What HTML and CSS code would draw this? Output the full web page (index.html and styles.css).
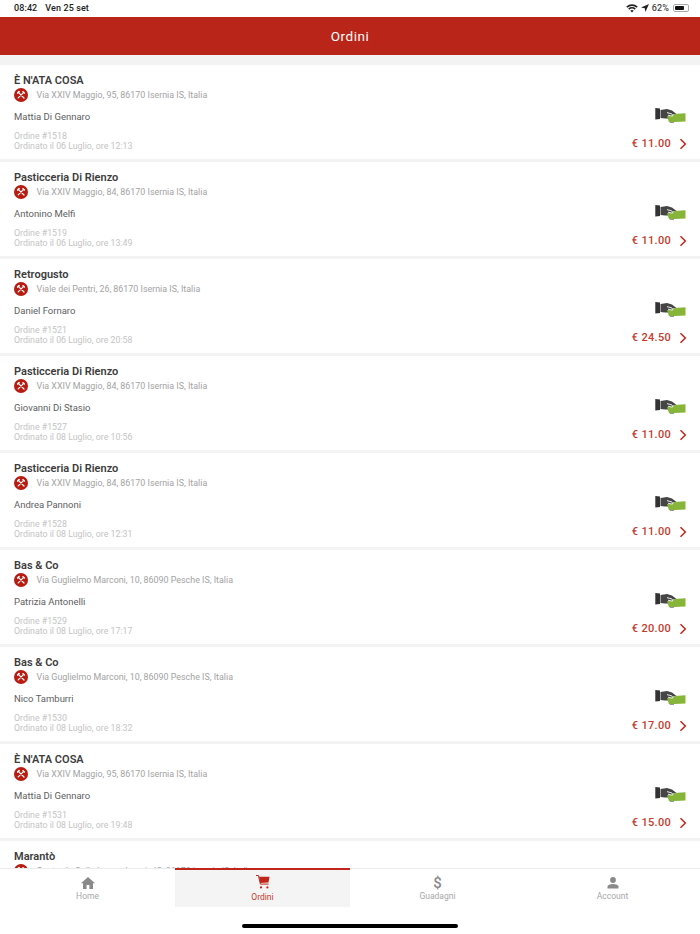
FILE: index.html
```html
<!DOCTYPE html>
<html lang="it">
<head>
<meta charset="utf-8">
<title>Ordini</title>
<link rel="stylesheet" href="styles.css">
</head>
<body>
<svg class="defs" width="0" height="0" aria-hidden="true">
  <symbol id="food" viewBox="0 0 14 14">
    <circle cx="7" cy="7" r="7" fill="#b71c10"/>
    <path d="M4.6 4.6L10 10M9.700 4.300L4.200 9.800" stroke="#fff" stroke-width="1.2" stroke-linecap="round"/>
    <path d="M3.700 5L5 3.700" stroke="#fff" stroke-width="1.700" stroke-linecap="round"/>
    <path d="M9 3.800L10.300 5" stroke="#fff" stroke-width="1.500" stroke-linecap="round"/>
  </symbol>
  <symbol id="cash" viewBox="0 0 31 15">
    <path d="M.3 0l4.700.5v10.500l-4.700.5z" fill="#333"/>
    <path d="M5.500 2L12 1l5 1.500 4.500 3.500-5 .5 1.500 2.500-2.500 1.500H10l-4.500-.5z" fill="#454545"/>
    <path d="M12 8l6-.2 1-1.800 11.500-.8v8.300L14 14.200z" fill="#86b53a"/>
    <path d="M12 4.600l5 1.400M13 7.200l4.500 1" stroke="#fff" stroke-width=".9"/>
    <path d="M15 14h4v1h-4z" fill="#999"/>
  </symbol>
  <symbol id="chev" viewBox="0 0 8 12">
    <path d="M1.500 1.200L6.300 6l-4.800 4.800" fill="none" stroke="#c0261a" stroke-width="1.500"/>
  </symbol>
</svg>
<div class="app">
  <div class="status">
    <div class="status-left"><span>08:42</span><span>Ven 25 set</span></div>
    <div class="status-right">
      <svg class="wifi" width="12" height="9" viewBox="0 0 12 9"><path d="M6 8.600L4.300 6.700a2.500 2.500 0 013.400 0zM3.300 5.700L2.200 4.500a5.600 5.600 0 017.600 0L8.700 5.700a4 4 0 00-5.400 0zM1.400 3.700L.3 2.500a8.400 8.400 0 0111.400 0l-1.100 1.200a6.800 6.800 0 00-9.200 0z" fill="#222"/></svg>
      <svg class="loc" width="8" height="8" viewBox="0 0 8 8"><path d="M8 0L0 3.600l3.800.6.6 3.800z" fill="#222"/></svg>
      <span>62%</span>
      <div class="batt"><div class="batt-fill"></div></div>
    </div>
  </div>
  <header class="bar">Ordini</header>
  <main class="list">
    <article class="card">
      <div class="card-main">
        <h2>È N'ATA COSA</h2>
        <div class="addr"><svg class="food"><use href="#food"/></svg><span>Via XXIV Maggio, 95, 86170 Isernia IS, Italia</span></div>
        <div class="person">Mattia Di Gennaro</div>
        <div class="meta">Ordine #1518<br>Ordinato il 06 Luglio, ore 12:13</div>
      </div>
      <div class="card-side"><svg class="cash"><use href="#cash"/></svg><div class="price"><span>€ 11.00</span><svg class="chev"><use href="#chev"/></svg></div></div>
    </article>
    <article class="card">
      <div class="card-main">
        <h2>Pasticceria Di Rienzo</h2>
        <div class="addr"><svg class="food"><use href="#food"/></svg><span>Via XXIV Maggio, 84, 86170 Isernia IS, Italia</span></div>
        <div class="person">Antonino Melfi</div>
        <div class="meta">Ordine #1519<br>Ordinato il 06 Luglio, ore 13:49</div>
      </div>
      <div class="card-side"><svg class="cash"><use href="#cash"/></svg><div class="price"><span>€ 11.00</span><svg class="chev"><use href="#chev"/></svg></div></div>
    </article>
    <article class="card">
      <div class="card-main">
        <h2>Retrogusto</h2>
        <div class="addr"><svg class="food"><use href="#food"/></svg><span>Viale dei Pentri, 26, 86170 Isernia IS, Italia</span></div>
        <div class="person">Daniel Fornaro</div>
        <div class="meta">Ordine #1521<br>Ordinato il 06 Luglio, ore 20:58</div>
      </div>
      <div class="card-side"><svg class="cash"><use href="#cash"/></svg><div class="price"><span>€ 24.50</span><svg class="chev"><use href="#chev"/></svg></div></div>
    </article>
    <article class="card">
      <div class="card-main">
        <h2>Pasticceria Di Rienzo</h2>
        <div class="addr"><svg class="food"><use href="#food"/></svg><span>Via XXIV Maggio, 84, 86170 Isernia IS, Italia</span></div>
        <div class="person">Giovanni Di Stasio</div>
        <div class="meta">Ordine #1527<br>Ordinato il 08 Luglio, ore 10:56</div>
      </div>
      <div class="card-side"><svg class="cash"><use href="#cash"/></svg><div class="price"><span>€ 11.00</span><svg class="chev"><use href="#chev"/></svg></div></div>
    </article>
    <article class="card">
      <div class="card-main">
        <h2>Pasticceria Di Rienzo</h2>
        <div class="addr"><svg class="food"><use href="#food"/></svg><span>Via XXIV Maggio, 84, 86170 Isernia IS, Italia</span></div>
        <div class="person">Andrea Pannoni</div>
        <div class="meta">Ordine #1528<br>Ordinato il 08 Luglio, ore 12:31</div>
      </div>
      <div class="card-side"><svg class="cash"><use href="#cash"/></svg><div class="price"><span>€ 11.00</span><svg class="chev"><use href="#chev"/></svg></div></div>
    </article>
    <article class="card">
      <div class="card-main">
        <h2>Bas &amp; Co</h2>
        <div class="addr"><svg class="food"><use href="#food"/></svg><span>Via Guglielmo Marconi, 10, 86090 Pesche IS, Italia</span></div>
        <div class="person">Patrizia Antonelli</div>
        <div class="meta">Ordine #1529<br>Ordinato il 08 Luglio, ore 17:17</div>
      </div>
      <div class="card-side"><svg class="cash"><use href="#cash"/></svg><div class="price"><span>€ 20.00</span><svg class="chev"><use href="#chev"/></svg></div></div>
    </article>
    <article class="card">
      <div class="card-main">
        <h2>Bas &amp; Co</h2>
        <div class="addr"><svg class="food"><use href="#food"/></svg><span>Via Guglielmo Marconi, 10, 86090 Pesche IS, Italia</span></div>
        <div class="person">Nico Tamburri</div>
        <div class="meta">Ordine #1530<br>Ordinato il 08 Luglio, ore 18:32</div>
      </div>
      <div class="card-side"><svg class="cash"><use href="#cash"/></svg><div class="price"><span>€ 17.00</span><svg class="chev"><use href="#chev"/></svg></div></div>
    </article>
    <article class="card">
      <div class="card-main">
        <h2>È N'ATA COSA</h2>
        <div class="addr"><svg class="food"><use href="#food"/></svg><span>Via XXIV Maggio, 95, 86170 Isernia IS, Italia</span></div>
        <div class="person">Mattia Di Gennaro</div>
        <div class="meta">Ordine #1531<br>Ordinato il 08 Luglio, ore 19:48</div>
      </div>
      <div class="card-side"><svg class="cash"><use href="#cash"/></svg><div class="price"><span>€ 15.00</span><svg class="chev"><use href="#chev"/></svg></div></div>
    </article>
    <article class="card">
      <div class="card-main">
        <h2>Marantò</h2>
        <div class="addr"><svg class="food"><use href="#food"/></svg><span>Contrada Colle Lungo, Isernia IS, 86170 Isernia IS, Italia</span></div>
      </div>
    </article>
  </main>
  <nav class="tabs">
    <div class="tab">
      <svg width="14" height="12" viewBox="0 0 14 12"><path d="M7 0L0 6.200h2V12h3.600V8h2.800v4H12V6.200h2z" fill="#8a8a8a"/></svg>
      <span>Home</span>
    </div>
    <div class="tab active">
      <svg width="14" height="14" viewBox="0 0 14 14"><path d="M0 .5h2.400l2 8.600h8.200" fill="none" stroke="#c0261a" stroke-width="1"/><path d="M3 1.800h10.500l-1 5.600-8.200.5z" fill="#c0261a"/><circle cx="5" cy="12.400" r="1.100" fill="#c0261a"/><circle cx="11.400" cy="12.400" r="1.100" fill="#c0261a"/></svg>
      <span>Ordini</span>
    </div>
    <div class="tab">
      <span class="dollar">$</span>
      <span>Guadagni</span>
    </div>
    <div class="tab">
      <svg width="12" height="12" viewBox="0 0 12 12"><circle cx="6" cy="3" r="2.900" fill="#8a8a8a"/><path d="M.5 11.500V9.600C.5 8 3 7 6 7s5.500 1 5.500 2.600v1.900z" fill="#8a8a8a"/></svg>
      <span>Account</span>
    </div>
  </nav>
  <div class="home-area"><div class="home-ind"></div></div>
</div>
</body>
</html>
```

FILE: styles.css
```css
* { box-sizing: border-box; }
html, body { margin: 0; padding: 0; }
body { font-family: Roboto, "Liberation Sans", sans-serif; background: #fff; }
.defs { position: absolute; }
.app { width: 700px; height: 934px; display: flex; flex-direction: column; overflow: hidden; }
.status { height: 17px; flex: none; display: flex; justify-content: space-between; align-items: center; padding: 0 11px 1px 14px; font-size: 9px; font-weight: 500; letter-spacing: .1px; color: #222; }
.status-left { display: flex; gap: 8px; }
.status-right { display: flex; align-items: center; gap: 3px; color: #444; }
.batt { width: 16px; height: 8px; border: 1px solid #aaa; border-radius: 2px; padding: 1px; margin-left: 1px; }
.batt-fill { width: 9px; height: 100%; background: #111; border-radius: 1px; }
.bar { height: 38px; flex: none; background: #b92619; color: #fff; font-size: 13.5px; letter-spacing: .55px; display: flex; align-items: center; justify-content: center; }
.list { flex: 1; min-height: 0; overflow: hidden; background: #f3f3f3; padding-top: 10px; display: flex; flex-direction: column; gap: 3px; }
.card { flex: none; height: 94px; background: #fff; display: flex; justify-content: space-between; padding: 9px 14px 0; }
.card-main { min-width: 0; }
h2 { margin: 0; font-size: 11px; line-height: 13px; font-weight: 600; color: #3c3c3c; }
.addr { display: flex; align-items: center; gap: 8.5px; margin-top: 1px; height: 14px; font-size: 8.9px; color: #a3a3a3; }
.food { width: 14px; height: 14px; flex: none; }
.person { margin-top: 8.5px; font-size: 9.5px; line-height: 12px; color: #606060; }
.meta { margin-top: 8px; font-size: 8.8px; line-height: 10px; color: #c4c4c4; }
.card-side { display: flex; flex-direction: column; align-items: flex-end; padding-top: 34px; }
.cash { width: 31px; height: 15px; }
.price { display: flex; align-items: center; gap: 8px; margin-top: 14px; margin-right: -1px; font-size: 11px; font-weight: 500; letter-spacing: .3px; color: #c73a2e; }
.chev { width: 8px; height: 12px; }
.tabs { flex: none; height: 39px; background: #fff; display: grid; grid-template-columns: repeat(4, 1fr); border-top: 1px solid #ececec; }
.tab { display: flex; flex-direction: column; align-items: center; justify-content: flex-start; padding-top: 8px; font-size: 8.5px; color: #a8a8a8; gap: 2px; }
.tab.active { background: #f4f4f4; color: #c73a2e; border-top: 2px solid #c0261a; margin-top: -1px; padding-top: 5px; gap: 3px; }
.dollar { font-size: 15px; line-height: 12px; font-weight: 500; color: #8a8a8a; }
.home-area { flex: none; height: 27px; padding-top: 17px; background: #fff; display: flex; justify-content: center; align-items: flex-start; }
.home-ind { width: 216px; height: 4px; border-radius: 2px; background: #000; }
```
